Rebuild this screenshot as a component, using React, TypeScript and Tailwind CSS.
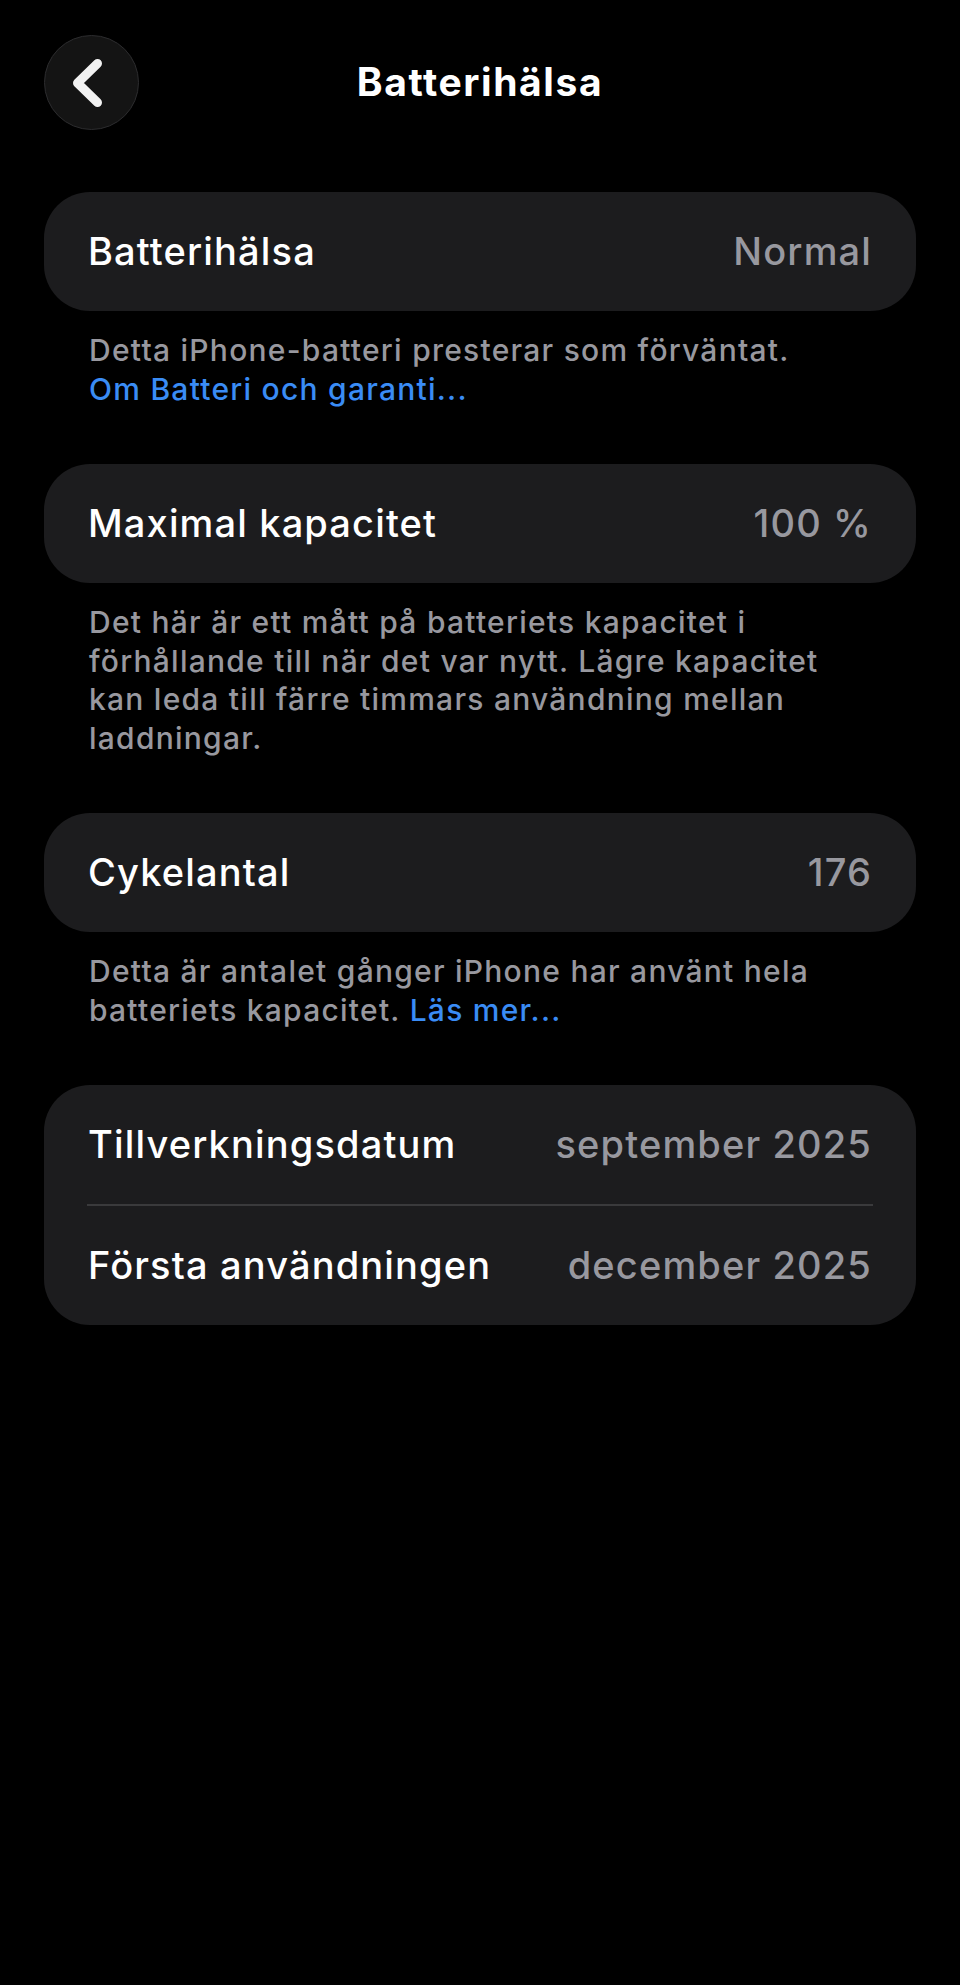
type Row = { label: string; value: string };

const Card = ({ rows }: { rows: Row[] }) => (
    <div className="mx-[44px] rounded-[46px] bg-[#1c1c1e]">
        {rows.map((row, i) => (
            <div key={row.label}>
                {i > 0 && <div className="mx-[43px] h-[1.5px] bg-[#3a3a3c]" />}
                <div className="h-[119px] px-[44px] flex flex-row justify-between items-center text-[38px] font-medium tracking-[1.15px]">
                    <span className="text-white">{row.label}</span>
                    <span className="text-[#98989f]">{row.value}</span>
                </div>
            </div>
        ))}
    </div>
);

const Footer = ({ children }: { children: React.ReactNode }) => (
    <p className="pl-[89px] pr-[110px] pt-[20px] pb-[56px] text-[30px] leading-[38.5px] font-medium tracking-[1.25px] text-[#98989f]">
        {children}
    </p>
);

export default function App() {
    return (
        <div className="min-h-[1985px] w-full bg-black font-['Inter','Liberation_Sans',sans-serif] antialiased">
            {/* header */}
            <div className="grid grid-cols-[95px_1fr_95px] items-center px-[44px] pt-[35px]">
                <button className="w-[95px] h-[95px] rounded-full bg-[#141414] border border-[#2c2c2e] flex items-center justify-center">
                    <svg width="95" height="95" viewBox="0 0 95 95" fill="none" className="shrink-0">
                        <polyline
                            points="53.5,28.5 33.5,48 53.5,67.5"
                            stroke="#f2f2f2"
                            strokeWidth="9"
                            strokeLinecap="round"
                            strokeLinejoin="round"
                        />
                    </svg>
                </button>
                <h1 className="text-center text-[39px] font-bold text-white tracking-[1.6px]">
                    Batterihälsa
                </h1>
                <div />
            </div>

            <div className="pt-[62px]">
                <Card rows={[{ label: "Batterihälsa", value: "Normal" }]} />
                <Footer>
                    Detta iPhone-batteri presterar som förväntat.
                    <br />
                    <span className="text-[#3a8cf5]">Om Batteri och garanti...</span>
                </Footer>

                <Card rows={[{ label: "Maximal kapacitet", value: "100 %" }]} />
                <Footer>
                    Det här är ett mått på batteriets kapacitet i förhållande till när det var nytt. Lägre
                    kapacitet kan leda till färre timmars användning mellan laddningar.
                </Footer>

                <Card rows={[{ label: "Cykelantal", value: "176" }]} />
                <Footer>
                    Detta är antalet gånger iPhone har använt hela batteriets kapacitet.{" "}
                    <span className="text-[#3a8cf5]">Läs mer...</span>
                </Footer>

                <Card
                    rows={[
                        { label: "Tillverkningsdatum", value: "september 2025" },
                        { label: "Första användningen", value: "december 2025" },
                    ]}
                />
            </div>
        </div>
    );
}
